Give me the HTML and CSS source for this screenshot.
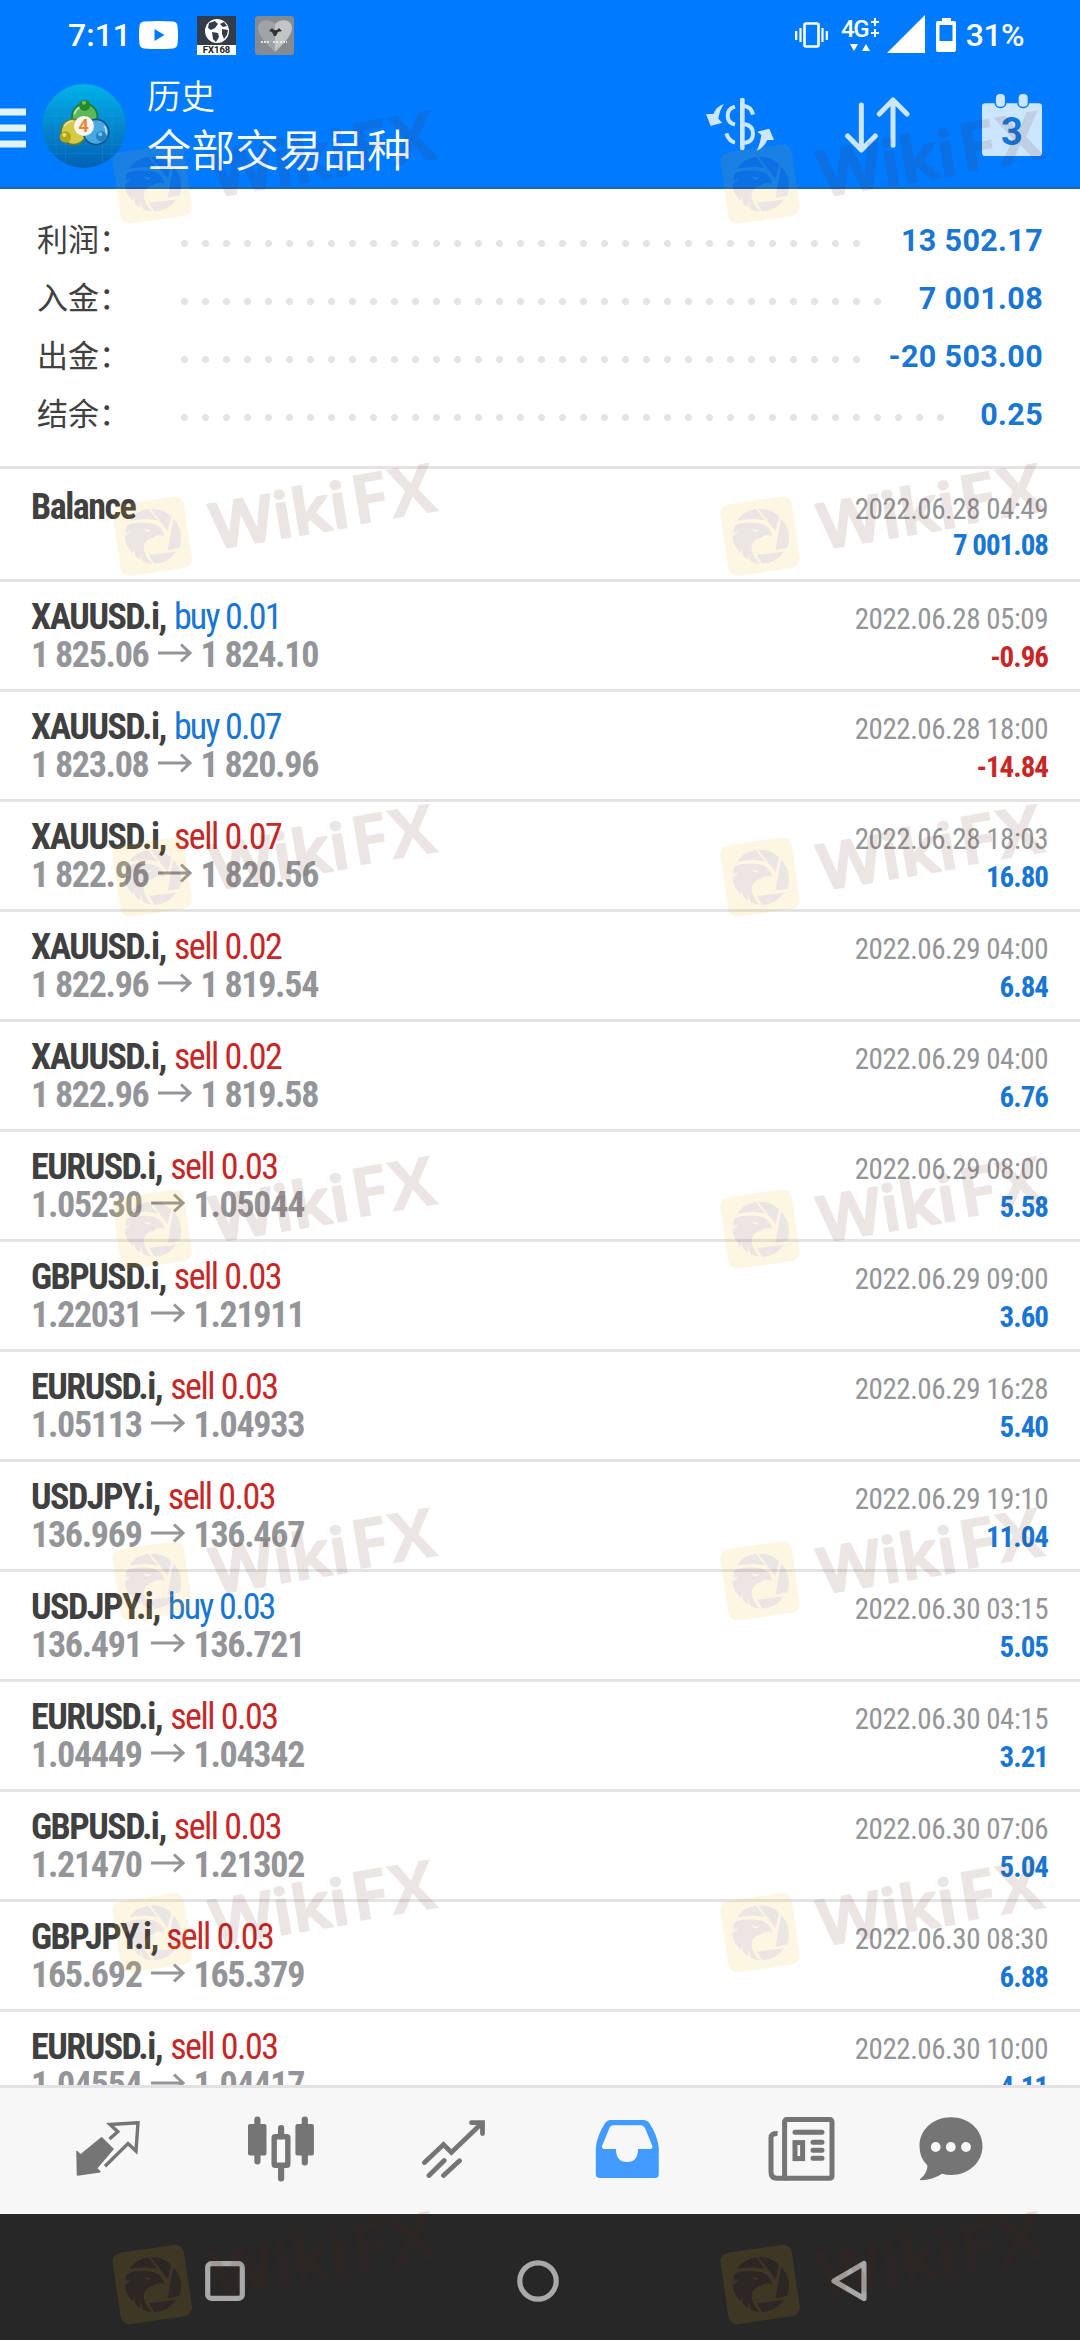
FILE: index.html
```html
<!DOCTYPE html>
<html lang="zh-CN">
<head>
    <meta charset="UTF-8">
    <meta name="viewport" content="width=device-width, initial-scale=1.0">
    <title>历史</title>
    <link rel="stylesheet" href="styles.css">
</head>
<body>

    <header class="header">
        <div class="status-bar">
            <span class="time">7:11</span>
            <svg class="youtube" width="39" height="28" viewBox="0 0 39 28">
                <path d="M5 .6Q19.500 -.6 34 .6Q38 1 38.500 5Q39.500 14 38.500 23Q38 27 34 27.400Q19.500 28.600 5 27.400Q1 27 .5 23Q-.5 14 .5 5Q1 1 5 .6Z" fill="#fff"/>
                <path d="M15.500 8v12l10-6z" fill="#007aff"/>
            </svg>
            <svg class="app-icon" width="39" height="39" viewBox="0 0 39 39">
                <path d="M0 0h39v39H0z" fill="#333d4a"/>
                <circle cx="20" cy="15" r="12" fill="#fff"/>
                <path d="M12 7l6-2 3 3-3 4-4 2-3-2zM15 16l6 1 1 4-3 5-3-3zM23 8l4-2 3 4-4 1zM25 13l6 1-1 5-3 4-2-5z" fill="#333d4a"/>
                <path d="M0 29h39v10H0z" fill="#fff"/>
                <text x="19.500" y="37.300" class="fx-text">FX168</text>
            </svg>
            <svg class="app-icon" width="39" height="39" viewBox="0 0 39 39">
                <rect width="39" height="39" rx="3" fill="#868b92"/>
                <path d="M20 36C12 28 3 20 3 12C3 3 15 2 20 8Z" fill="#a0a3a7"/>
                <path d="M20 36C28 28 37 20 37 12C37 3 25 2 20 8Z" fill="#c2c4c6"/>
                <path d="M14 15l3-3 2 2h3l2-2 3 3-4 1-2 4h-2l-2-4z" fill="#333"/>
                <path d="M6 26h9M18 26h5M25 26h7" stroke="#e6e6e6" stroke-width="2" stroke-dasharray="2 1"/>
            </svg>
            <div class="status-right">
                <svg width="33" height="26" viewBox="0 0 33 26" fill="none" stroke="#fff">
                    <rect x="9.500" y="1.500" width="14" height="23" rx="1.500" stroke-width="2.600"/>
                    <path d="M1.200 9v9M5.500 6v14M27.500 6v14M31.800 9v9" stroke-width="2.200"/>
                </svg>
                <svg class="network" width="38" height="34" viewBox="0 0 38 34">
                    <text x="0" y="19" class="network-text">4G</text>
                    <path d="M30 4h8M34 0v8M30 15h8M34 11v8" stroke="#fff" stroke-width="2"/>
                    <path d="M9 26h8l-4 7zM21 33h8l-4-7z" fill="#fff"/>
                </svg>
                <svg class="signal" width="38" height="38" viewBox="0 0 38 38"><path d="M38 0v38H0z" fill="#fff"/></svg>
                <svg class="battery" width="20" height="34" viewBox="0 0 20 34">
                    <path d="M6 0h9v3h3q2 0 2 2v27q0 2-2 2H2q-2 0-2-2V5q0-2 2-2h4zM3.500 7v16h13V7z" fill="#fff" fill-rule="evenodd"/>
                </svg>
                <span class="percent">31%</span>
            </div>
        </div>
        <div class="toolbar">
            <svg class="menu" width="26" height="40" viewBox="0 0 26 40"><path d="M0 4h26M0 20h26M0 36h26" stroke="#e2f3ff" stroke-width="7"/></svg>
            <svg class="logo" width="84" height="84" viewBox="18 24 252 252">
                <defs>
                    <linearGradient id="sky" x1="0" y1="0" x2="0" y2="1">
                        <stop offset="0" stop-color="#00b2ea"/>
                        <stop offset=".55" stop-color="#0584cb"/>
                        <stop offset="1" stop-color="#0060b4"/>
                    </linearGradient>
                </defs>
                <circle cx="144" cy="150" r="126" fill="url(#sky)"/>
                <path d="M60 58v180M88 40v220M200 40v220M228 58v180M35 92h218M22 120h244M22 205h244M38 233h212" stroke="#25a4dc" stroke-opacity=".4" stroke-width="2"/>
                <circle cx="146" cy="121" r="38" fill="#5fb85a" stroke="#1d7a3a" stroke-width="5"/>
                <circle cx="113" cy="168" r="38" fill="#d4cb45" stroke="#5f7a2b" stroke-width="5"/>
                <circle cx="180" cy="168" r="38" fill="#4ba9e2" stroke="#14578f" stroke-width="5"/>
                <path d="M84 150q10-16 28-16M115 115q5-18 20-22M205 150q10 14 3 30" fill="none" stroke="#fff" stroke-opacity=".55" stroke-width="6"/>
                <circle cx="146" cy="88" r="17" fill="#268a2b"/>
                <circle cx="88" cy="183" r="17" fill="#b3a41c"/>
                <circle cx="196" cy="181" r="16" fill="#2280c4"/>
                <circle cx="144" cy="80" r="6" fill="#6fc46a"/>
                <circle cx="85" cy="177" r="6" fill="#e8dd6f"/>
                <circle cx="193" cy="175" r="6" fill="#7cc4ee"/>
                <circle cx="144" cy="150" r="30" fill="#f5f5f2"/>
                <text x="143" y="169" class="logo-text">4</text>
            </svg>
            <div class="titles">
                <div class="title">历史</div>
                <div class="subtitle">全部交易品种</div>
            </div>
            <div class="actions">
                <svg width="68" height="54" viewBox="18 54 204 162" fill="none" stroke="#cce6ff" stroke-width="12">
                    <path d="M127 60v144" stroke-width="14" stroke-linecap="round"/>
                    <path d="M105 80q-22 6-22 27t22 27M132 78q22 2 27 26M132 132q27 4 27 29t-27 28M105 188q-18-4-26-28"/>
                    <path d="M72 72q-22 6-32 30l-22 0 14 36 35-10-12-12q4-26 17-44zM170 212q22-8 32-32h20l-14-34-36 9 12 10q-4 28-14 47z" fill="#cce6ff" stroke="none"/>
                </svg>
                <svg width="66" height="56" viewBox="431 52 198 168" fill="none" stroke="#cce6ff" stroke-width="15" stroke-linecap="round" stroke-linejoin="round">
                    <path d="M480 76v134M439 169l41 42 42-42M575 197V62M534 103l41-42 42 42"/>
                </svg>
                <svg class="calendar" width="60" height="62" viewBox="847 42 180 186">
                    <rect x="847" y="70" width="180" height="158" rx="10" fill="#cce6ff"/>
                    <rect x="889" y="42" width="27" height="38" rx="12" fill="#cce6ff" stroke="#007aff" stroke-width="9" paint-order="stroke"/>
                    <rect x="957" y="42" width="27" height="38" rx="12" fill="#cce6ff" stroke="#007aff" stroke-width="9" paint-order="stroke"/>
                    <text x="937" y="194" class="calendar-text">3</text>
                </svg>
            </div>
        </div>
    </header>

    <section class="summary">
        <div class="summary-row"><span class="label">利润：</span><div class="leader"><i class="dots"></i></div><b>13 502.17</b></div>
        <div class="summary-row"><span class="label">入金：</span><div class="leader"><i class="dots"></i></div><b>7 001.08</b></div>
        <div class="summary-row"><span class="label">出金：</span><div class="leader"><i class="dots"></i></div><b>-20 503.00</b></div>
        <div class="summary-row"><span class="label">结余：</span><div class="leader"><i class="dots"></i></div><b>0.25</b></div>
    </section>

    <main class="deals" id="deals">
        <div class="deal">
            <div class="line"><span class="symbol">Balance</span><span class="date">2022.06.28 04:49</span></div>
            <div class="line"><span class="prices"></span><span class="profit">7 001.08</span></div>
        </div>
    </main>

    <nav class="tabs">
        <a class="tab">
            <svg width="64" height="56" viewBox="0 0 64 56">
                <path d="M1 30.500L4.500 34L25.600 16.800L37 28L20.500 47.300L24 50.700L1.500 54Z" fill="currentColor" stroke="currentColor" stroke-width="1.500" stroke-linejoin="round"/>
                <path d="M33.500 18L41.800 10.700L34 3.500L62 1.700L60 30L52 22.500L29 45.300" fill="none" stroke="currentColor" stroke-width="3.400"/>
            </svg>
        </a>
        <a class="tab">
            <svg width="66" height="66" viewBox="0 0 66 66" fill="currentColor">
                <rect y="8" width="18.500" height="31.500" rx="2"/>
                <rect x="6.300" y=".5" width="6.200" height="48" rx="3"/>
                <rect x="47.400" y="8" width="18.500" height="31.500" rx="2"/>
                <rect x="53.700" y=".5" width="6.200" height="49" rx="3"/>
                <rect x="30" y="9" width="6.200" height="12" rx="3"/>
                <rect x="30" y="50" width="6.200" height="15.500" rx="3"/>
                <rect x="26.200" y="20.700" width="13.600" height="28.600" rx="1" fill="none" stroke="currentColor" stroke-width="5.400"/>
            </svg>
        </a>
        <a class="tab">
            <svg width="64" height="58" viewBox="0 0 64 58" fill="none" stroke="currentColor" stroke-width="4.800" stroke-linecap="round">
                <path d="M2.500 42.500L21.500 24.500L29.400 32.500L59.500 3.500M49.500 2.700H60.500V13.500M7 55.500L22.200 40.500M21.500 55.500L37.500 40.800"/>
            </svg>
        </a>
        <a class="tab active">
            <svg width="64" height="58" viewBox="0 0 64 58">
                <path d="M.8 28Q2 15 10.500 2.500Q12.500 0 15 0H49Q52 0 54 2.500Q62.500 15 63.800 28V54q0 4-4 4H4.800q-4 0-4-4ZM18 5.300Q15.500 5.300 14.500 8L7 26Q6.500 29 9.500 29H21Q21 42 32 42T43 29H55Q58 29 57.300 26L50 8Q48.500 5.300 46 5.300Z" fill="currentColor" fill-rule="evenodd"/>
            </svg>
        </a>
        <a class="tab">
            <svg width="67" height="64" viewBox="0 0 67 64" fill="none" stroke="currentColor" stroke-width="5">
                <rect x="16.600" y="2.600" width="47.400" height="58.600" rx="2"/>
                <path d="M9.600 16.500Q3 16 3 21V55Q3 61.200 9 61.200H18"/>
                <path d="M27 15.300H54M45 25.300H54M45 33.300H54M45 41.300H54" stroke-linecap="round"/>
                <rect x="27" y="25.600" width="7.600" height="16"/>
            </svg>
        </a>
        <a class="tab">
            <svg width="64" height="64" viewBox="0 0 64 64">
                <path d="M32 .3C50 .3 63.500 13 63.500 29S50 58 32 58Q27 58 23 56.800Q14 63 1.500 63.300Q.3 63.300 1.200 62Q8.500 56 8.400 48.500Q.5 41 .5 29C.5 13 14 .3 32 .3Z" fill="currentColor"/>
                <g fill="#f7f7f7"><circle cx="16.700" cy="30" r="4.900"/><circle cx="31.800" cy="30" r="4.900"/><circle cx="47" cy="30" r="4.900"/></g>
            </svg>
        </a>
    </nav>

    <div class="system-nav">
        <svg width="40" height="40" viewBox="0 0 40 40"><rect x="2.700" y="2.700" width="34.600" height="34.600" rx="3.500"/></svg>
        <svg width="42" height="42" viewBox="0 0 42 42"><circle cx="21" cy="21" r="18.200"/></svg>
        <svg width="36" height="42" viewBox="0 0 36 42"><path d="M33 3.500V38.500L3 21Z"/></svg>
    </div>

    <svg class="watermarks" id="watermarks" width="1080" height="2340">
        <defs>
            <g id="mark" opacity=".115">
                <rect x="4.300" y="4.500" width="72" height="72" rx="9" transform="rotate(-8.400 40.300 40.500)" fill="#ecb313"/>
                <g transform="scale(.3333) translate(-36 -32)" fill="#5a2614">
                    <path d="M88 107A82 82 0 0 1 144 72L172 106Q130 98 88 107Z"/>
                    <path d="M152 72A82 82 0 0 1 214 94L203 138Z"/>
                    <path d="M220 101A82 82 0 0 1 238 188L203 195Z"/>
                    <path d="M147 210L228 200A82 82 0 0 1 163 236Z"/>
                    <path d="M80 122C100 110 140 113 158 116C177 120 190 132 193 153C180 147 168 150 160 158C140 160 129 178 132 195C135 212 146 225 156 236Q141 234 130 229L118 200L122 224Q112 218 105 211L104 190L98 204Q74 180 75 155L92 140L76 143Z"/>
                    <path d="M131 131L154 135Q142 146 131 131Z" fill="#ecb313"/>
                </g>
                <g class="mark-text">
                    <text class="mark-wiki" transform="translate(102.500 53.500) rotate(-9.500)" textLength="139" lengthAdjust="spacingAndGlyphs">Wiki</text>
                    <text class="mark-fx" transform="translate(242.500 29.500) rotate(-9.500)" textLength="86" lengthAdjust="spacingAndGlyphs">FX</text>
                </g>
            </g>
        </defs>
    </svg>

    <script>
        const deals = [
            ["XAUUSD.i", "buy", "0.01", "1 825.06", "1 824.10", "2022.06.28 05:09", "-0.96"],
            ["XAUUSD.i", "buy", "0.07", "1 823.08", "1 820.96", "2022.06.28 18:00", "-14.84"],
            ["XAUUSD.i", "sell", "0.07", "1 822.96", "1 820.56", "2022.06.28 18:03", "16.80"],
            ["XAUUSD.i", "sell", "0.02", "1 822.96", "1 819.54", "2022.06.29 04:00", "6.84"],
            ["XAUUSD.i", "sell", "0.02", "1 822.96", "1 819.58", "2022.06.29 04:00", "6.76"],
            ["EURUSD.i", "sell", "0.03", "1.05230", "1.05044", "2022.06.29 08:00", "5.58"],
            ["GBPUSD.i", "sell", "0.03", "1.22031", "1.21911", "2022.06.29 09:00", "3.60"],
            ["EURUSD.i", "sell", "0.03", "1.05113", "1.04933", "2022.06.29 16:28", "5.40"],
            ["USDJPY.i", "sell", "0.03", "136.969", "136.467", "2022.06.29 19:10", "11.04"],
            ["USDJPY.i", "buy", "0.03", "136.491", "136.721", "2022.06.30 03:15", "5.05"],
            ["EURUSD.i", "sell", "0.03", "1.04449", "1.04342", "2022.06.30 04:15", "3.21"],
            ["GBPUSD.i", "sell", "0.03", "1.21470", "1.21302", "2022.06.30 07:06", "5.04"],
            ["GBPJPY.i", "sell", "0.03", "165.692", "165.379", "2022.06.30 08:30", "6.88"],
            ["EURUSD.i", "sell", "0.03", "1.04554", "1.04417", "2022.06.30 10:00", "4.11"]
        ];
        const arrow = '<svg class="arrow" width="34" height="20" viewBox="0 0 34 20"><path d="M0 10H32M23 1.500L32 10L23 18.500"/></svg>';

        const list = document.getElementById("deals");
        deals.forEach(([symbol, side, volume, open, close, date, profit]) => {
            const row = document.createElement("div");
            row.className = "deal";
            row.innerHTML = `
                <div class="line">
                    <span><span class="symbol">${symbol},</span><span class="${side}">${side} ${volume}</span></span>
                    <span class="date">${date}</span>
                </div>
                <div class="line">
                    <span class="prices">${open}${arrow}${close}</span>
                    <span class="profit ${profit.startsWith("-") ? "loss" : ""}">${profit}</span>
                </div>`;
            list.appendChild(row);
        });

        // Watermark grid: two columns
        const marks = document.getElementById("watermarks");
        [143.5, 495.7, 836.7, 1188.7, 1540.5, 1892.3, 2244].forEach(y => {
            [112, 719.8].forEach(x => {
                const use = document.createElementNS("http://www.w3.org/2000/svg", "use");
                use.setAttribute("href", "#mark");
                use.setAttribute("x", x);
                use.setAttribute("y", y);
                marks.appendChild(use);
            });
        });
    </script>

</body>
</html>
```
FILE: styles.css
```css
* {
    box-sizing: border-box;
}

body {
    margin: 0;
    width: 1080px;
    height: 2340px;
    display: flex;
    flex-direction: column;
    position: relative;
    overflow: hidden;
    background-color: #fff;
    font-family: "Roboto", "Noto Sans CJK SC", sans-serif;
}

svg {
    display: block;
    flex-shrink: 0;
}

/* Header */
.header {
    height: 189px;
    flex-shrink: 0;
    background-color: #007aff;
    border-bottom: 2px solid #1a66b4;
    color: #fff;
}

.status-bar {
    height: 70px;
    padding: 0 56px 0 68px;
    display: flex;
    align-items: center;
    font-size: 32px;
    font-weight: 500;
    line-height: 70px;
}

.time {
    width: 71px;
}

.app-icon {
    margin-left: 19px;
}

.fx-text {
    font-size: 9.5px;
    font-weight: 700;
    text-anchor: middle;
    fill: #222;
}

.status-right {
    margin-left: auto;
    display: flex;
    align-items: center;
}

.network {
    margin-left: 13px;
    overflow: visible;
}

.network-text {
    font-size: 24px;
    font-weight: 500;
    fill: #fff;
    letter-spacing: -1.3px;
}

.signal {
    margin-left: 8px;
    margin-top: -2px;
}

.battery {
    margin: 0 10px 0 11px;
}

.percent {
    letter-spacing: -0.6px;
}

.toolbar {
    height: 112px;
    display: flex;
    align-items: center;
    padding-right: 38px;
}

.menu {
    margin: 4px 16px 0 0;
}

.logo-text {
    font-family: "Noto Sans", sans-serif;
    font-size: 52px;
    font-weight: 700;
    text-anchor: middle;
    fill: #e8862e;
}

.titles {
    margin-left: 21px;
    padding-bottom: 6px;
    font-weight: 350;
    font-family: "Noto Sans CJK SC", sans-serif;
}

.title {
    font-size: 34px;
    line-height: 50px;
}

.subtitle {
    font-size: 44px;
    line-height: 56px;
}

.actions {
    margin-left: auto;
    padding-bottom: 2px;
    display: flex;
    align-items: center;
    gap: 71px;
}

.calendar-text {
    font-size: 114px;
    font-weight: 700;
    text-anchor: middle;
    fill: #1476dc;
}

/* Totals */
.summary {
    height: 280px;
    flex-shrink: 0;
    padding: 23px 37px 0 37px;
    border-bottom: 3px solid #e4e4e4;
}

.summary-row {
    height: 58px;
    display: flex;
    align-items: center;
    color: #404040;
    font-size: 31px;
    line-height: 58px;
}

.label {
    width: 137px;
    flex-shrink: 0;
    white-space: nowrap;
}

.leader {
    flex: 1;
    margin-right: 17px;
    padding-top: 5px;
}

.dots {
    display: block;
    width: round(down, 100%, 21px);
    height: 7px;
    background: radial-gradient(circle at center, #e4e4e4 3.2px, transparent 3.8px) 0 0 / 21px 7px;
}

.summary-row b {
    color: #1976d2;
    font-size: 30.5px;
    letter-spacing: 0.35px;
}

/* Deal list */
.deals {
    flex: 1;
    min-height: 0;
    overflow: hidden;
    padding-top: 3px;
    font-family: "Roboto Condensed", "Roboto", sans-serif;
}

.deal {
    height: 110px;
    padding: 16px 32px 0 31px;
    border-bottom: 3px solid #e4e4e4;
}

.line {
    height: 38px;
    display: flex;
    justify-content: space-between;
    align-items: baseline;
    font-size: 36px;
    line-height: 38px;
    white-space: nowrap;
}

.symbol {
    font-weight: 700;
    letter-spacing: -1.5px;
    color: #404040;
    margin-right: 8px;
}

.buy {
    color: #1976d2;
    letter-spacing: -1.8px;
}

.sell {
    color: #c62828;
    letter-spacing: -1.5px;
}

.prices {
    font-weight: 700;
    color: #949598;
    letter-spacing: -1.3px;
}

.arrow {
    display: inline-block;
    margin: 0 9px 4px;
    fill: none;
    stroke: #949598;
    stroke-width: 3;
}

.date {
    font-size: 29px;
    color: #949598;
    letter-spacing: -0.45px;
}

.profit {
    font-size: 29px;
    font-weight: 700;
    color: #1976d2;
    letter-spacing: -1px;
}

.loss {
    color: #c62828;
}

/* Bottom tabs */
.tabs {
    height: 129px;
    flex-shrink: 0;
    display: grid;
    grid-template-columns: repeat(4, 173px) 176px 1fr;
    padding: 0 67px 0 21px;
    border-top: 3px solid #e2e2e2;
    background-color: #f7f7f7;
    color: #757575;
}

.tab {
    display: flex;
    justify-content: center;
    align-items: center;
    padding-bottom: 5px;
}

.tab.active {
    color: #429cff;
}

.system-nav {
    height: 126px;
    flex-shrink: 0;
    display: flex;
    justify-content: space-between;
    align-items: center;
    padding: 8px 213px 0 205px;
    background-color: #272727;
    fill: none;
    stroke: #a9a9a9;
    stroke-width: 5.2;
    stroke-linejoin: round;
}

/* Watermarks */
.watermarks {
    position: absolute;
    top: 0;
    left: 0;
    pointer-events: none;
}

.mark-text {
    fill: #5a2614;
    stroke: #5a2614;
    stroke-linejoin: round;
    font-family: "Open Sans", sans-serif;
}

.mark-wiki {
    font-size: 63px;
    font-weight: 600;
    stroke-width: 2.5px;
}

.mark-fx {
    font-size: 69px;
    font-weight: 700;
    stroke-width: 0;
}
```
